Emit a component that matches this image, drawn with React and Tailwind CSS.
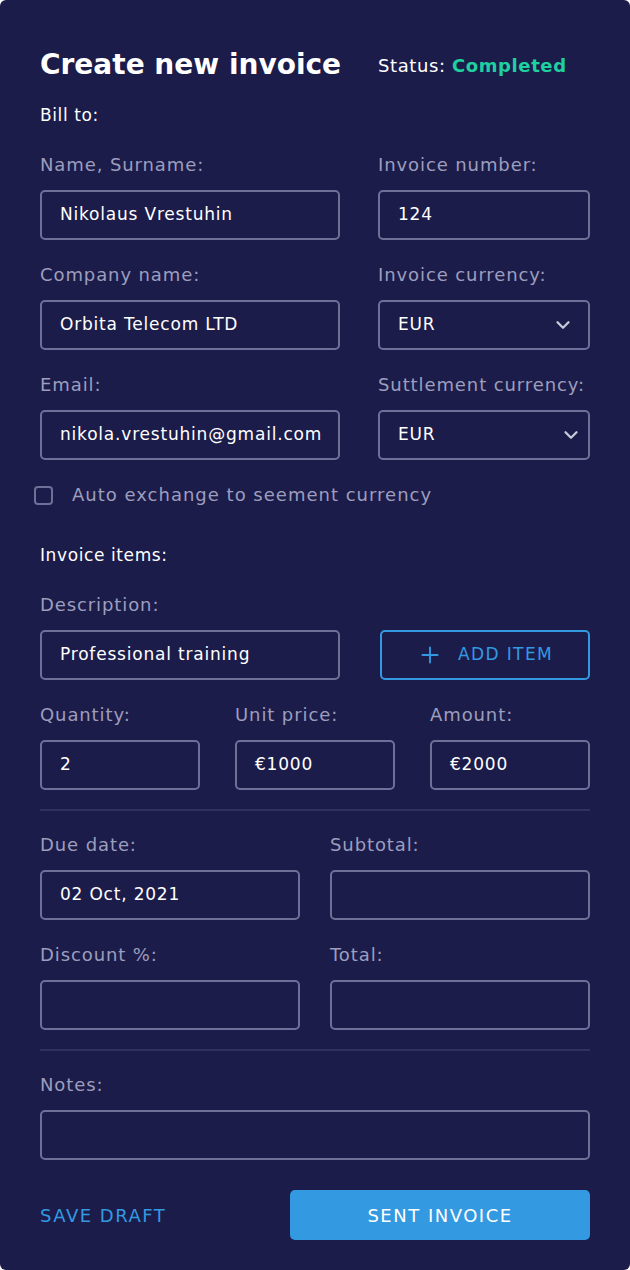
import React from 'react';
import { ChevronDown, Plus } from 'lucide-react';

const Label = ({ children }) => (
  <p className="text-[18px] font-normal leading-5 tracking-[0.9px] text-[#9d9ebd] mb-[15px] whitespace-nowrap">{children}</p>
);

const Field = ({ value, className = '' }) => (
  <div className={`h-[50px] rounded-[5px] border-2 border-[#6f7097] flex items-center px-[18px] text-[17px] tracking-[0.8px] text-white ${className}`}>
    {value}
  </div>
);

const Select = ({ value, tight }) => (
  <div className={`h-[50px] rounded-[5px] border-2 border-[#6f7097] flex items-center justify-between pl-[18px] ${tight ? 'pr-[6px]' : 'pr-[14px]'} text-[17px] tracking-[0.8px] text-white`}>
    <span>{value}</span>
    <ChevronDown size={22} strokeWidth={2.5} className="text-[#c9cadb]" />
  </div>
);

const Divider = () => <div className="h-[2px] bg-[#2f3160] mt-[19px] mb-[24px]" />;

export default function App() {
  return (
    <div className="bg-white min-h-[1270px] w-[630px] font-['DejaVu_Sans',sans-serif]">
      <div className="bg-[#1c1c4a] rounded-[6px] h-[1270px] px-10 pt-[45px]">
        {/* header */}
        <div className="flex items-center justify-between">
          <h1 className="text-[28px] font-bold text-white leading-10">Create new invoice</h1>
          <p className="text-[18px] text-white w-[212px] tracking-[0.6px] whitespace-nowrap">
            Status: <span className="font-bold text-[#1fd0a0]">Completed</span>
          </p>
        </div>
        <p className="text-[17px] text-white mt-[20px] leading-5 tracking-[0.6px]">Bill to:</p>

        {/* bill to */}
        <div className="grid grid-cols-[300px_212px] gap-x-[38px] gap-y-[25px] mt-[30px]">
          <div>
            <Label>Name, Surname:</Label>
            <Field value="Nikolaus Vrestuhin" />
          </div>
          <div>
            <Label>Invoice number:</Label>
            <Field value="124" />
          </div>
          <div>
            <Label>Company name:</Label>
            <Field value="Orbita Telecom LTD" />
          </div>
          <div>
            <Label>Invoice currency:</Label>
            <Select value="EUR" />
          </div>
          <div>
            <Label>Email:</Label>
            <Field value="nikola.vrestuhin@gmail.com" />
          </div>
          <div>
            <Label>Suttlement currency:</Label>
            <Select value="EUR" tight />
          </div>
        </div>

        <label className="flex items-center gap-[19px] mt-[25px] -ml-[6px]">
          <span className="w-[19px] h-[19px] rounded-[4px] border-2 border-[#6f7097]" />
          <span className="text-[18px] text-[#9d9ebd] leading-5 tracking-[1px]">Auto exchange to seement currency</span>
        </label>

        {/* items */}
        <p className="text-[17px] text-white mt-[40px] leading-5 tracking-[0.6px]">Invoice items:</p>
        <div className="mt-[30px]">
          <Label>Description:</Label>
          <div className="flex items-center gap-10">
            <Field value="Professional training" className="w-[300px]" />
            <button className="flex-1 h-[50px] rounded-[5px] border-2 border-[#3399e1] text-[#3399e1] text-[17px] flex items-center justify-center gap-[15px] tracking-[1.4px]">
              <Plus size={26} strokeWidth={1.75} />
              ADD ITEM
            </button>
          </div>
        </div>

        <div className="grid grid-cols-3 gap-x-[35px] mt-[25px]">
          <div>
            <Label>Quantity:</Label>
            <Field value="2" />
          </div>
          <div>
            <Label>Unit price:</Label>
            <Field value="€1000" />
          </div>
          <div>
            <Label>Amount:</Label>
            <Field value="€2000" />
          </div>
        </div>

        <Divider />

        <div className="grid grid-cols-2 gap-x-[30px] gap-y-[25px]">
          <div>
            <Label>Due date:</Label>
            <Field value="02 Oct, 2021" />
          </div>
          <div>
            <Label>Subtotal:</Label>
            <Field value="" />
          </div>
          <div>
            <Label>Discount %:</Label>
            <Field value="" />
          </div>
          <div>
            <Label>Total:</Label>
            <Field value="" />
          </div>
        </div>

        <Divider />

        <div>
          <Label>Notes:</Label>
          <Field value="" />
        </div>

        {/* actions */}
        <div className="flex items-center justify-between mt-[30px]">
          <button className="text-[18px] text-[#3399e1] tracking-[1.5px]">SAVE DRAFT</button>
          <button className="w-[300px] h-[50px] rounded-[5px] bg-[#3399e1] text-white text-[18px] tracking-[1.5px]">SENT INVOICE</button>
        </div>
      </div>
    </div>
  );
}
